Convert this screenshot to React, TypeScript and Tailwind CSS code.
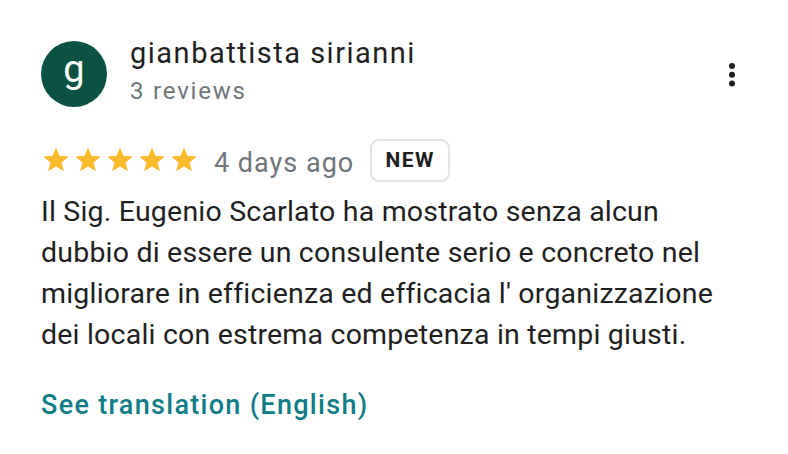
function Star() {
  return (
    <svg viewBox="0 0 24 24" className="w-[30px] h-[30px]">
      <path
        fill="#fcb92c"
        d="M12 17.27L18.18 21l-1.64-7.03L22 9.24l-7.19-.61L12 2 9.19 8.63 2 9.24l5.46 4.73L5.82 21z"
      />
    </svg>
  );
}

function MoreDots() {
  return (
    <svg viewBox="0 0 12 24" className="w-[12px] h-[24px]">
      <circle cx="6" cy="3" r="3" fill="#1f1f1f" />
      <circle cx="6" cy="11.7" r="3" fill="#1f1f1f" />
      <circle cx="6" cy="20.4" r="3" fill="#1f1f1f" />
    </svg>
  );
}

export default function App() {
  return (
    <div className="w-[788px] h-[454px] bg-white font-['Roboto',sans-serif] text-[#1f1f1f]">
      <div className="pl-[41px] pr-[50px] pt-[41px]">
        {/* Header */}
        <div className="flex items-start">
          <div className="w-[66px] h-[66px] shrink-0 rounded-full bg-[#0b5245] flex items-center justify-center text-white text-[38px] leading-none pb-[10px]">
            g
          </div>
          <div className="ml-[23px] -mt-[6px] flex-1">
            <div className="text-[29px] leading-[36px] tracking-[1.5px]">gianbattista sirianni</div>
            <div className="text-[24px] leading-[40px] tracking-[1.8px] text-[#70757a]">3 reviews</div>
          </div>
          <div className="mt-[22px]">
            <MoreDots />
          </div>
        </div>

        {/* Rating row */}
        <div className="flex items-start mt-[28px]">
          <div className="flex items-center gap-[2px] mt-[6px]">
            <Star />
            <Star />
            <Star />
            <Star />
            <Star />
          </div>
          <span className="ml-[15px] mt-[3px] text-[27px] leading-[43px] tracking-[1px] text-[#70757a]">4 days ago</span>
          <span className="ml-[16px] w-[80px] h-[43px] flex items-center justify-center border-2 border-[#e1e3e6] rounded-[9px] text-[21px] font-bold tracking-[1.5px] text-[#1f1f1f]">
            NEW
          </span>
        </div>

        {/* Body */}
        <p className="mt-[6px] text-[28.5px] leading-[41px] tracking-[0.2px] max-w-[690px]">
          Il Sig. Eugenio Scarlato ha mostrato senza alcun dubbio di essere un consulente serio e concreto nel migliorare in
          efficienza ed efficacia l' organizzazione dei locali con estrema competenza in tempi giusti.
        </p>

        <div className="mt-[32px] text-[27px] leading-[36px] font-medium tracking-[1.3px] text-[#0f7c87]">
          See translation (English)
        </div>
      </div>
    </div>
  );
}
